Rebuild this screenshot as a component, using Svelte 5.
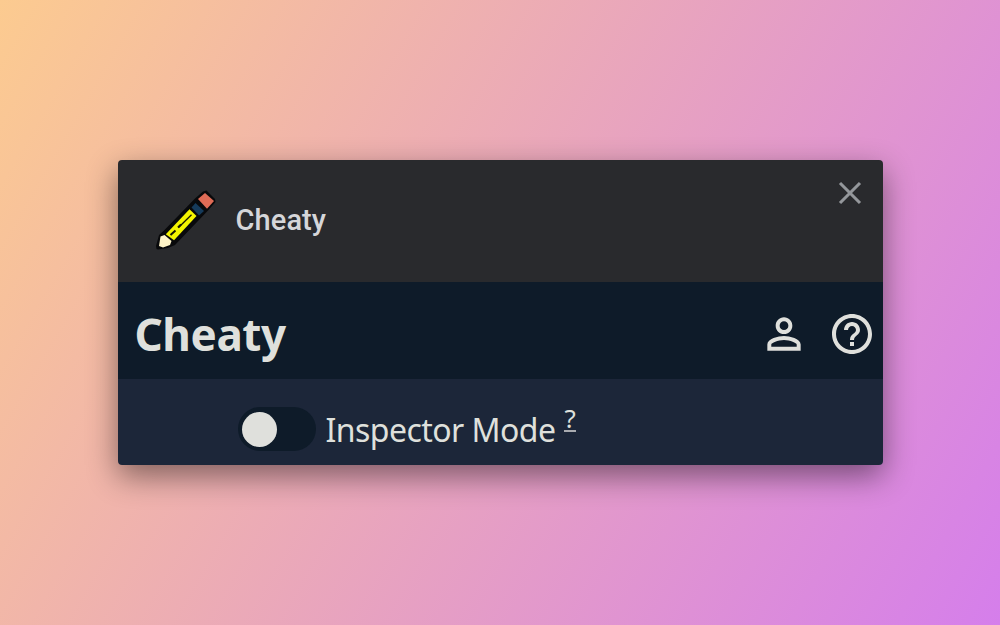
<script>
  let inspector = $state(false);
</script>

<main>
  <section class="card">
    <header class="top">
      <svg class="pencil" viewBox="0 0 70 70" width="70" height="70">
        <path d="M6 61 9 50 14 45.500 45 13.500 53 6.500 56.500 5.500 65 14 65.500 17 58 25.500 25 60 18 63 8 64.500 6.500 64Z" fill="#08090b" />
        <path d="M15.800 49.200 39.500 24.200 46.500 31 24 55.300Z" fill="#f4f400" />
        <path d="M28.500 42.500 41.500 29.800" stroke="#181903" stroke-width="1.300" fill="none" />
        <path d="M20.500 50 25.500 45.500M28 42.500 31 39.500" stroke="#181903" stroke-width="2" />
        <path d="M41.500 22.500 45.500 18 54 26 49 30.500Z" fill="#153a5a" />
        <path d="M48 14 55 8 64 16 57 23.700Z" fill="#df6b56" />
        <path d="M10.500 51.500 14.500 50 21.500 56 20 60 13 62.500 9 61Z" fill="#fff5c8" />
      </svg>
      <span class="name">Cheaty</span>
      <svg class="close" viewBox="0 0 24 24" width="24" height="24">
        <path d="M2 2 22 22M22 2 2 22" stroke="#94979b" stroke-width="3.100" />
      </svg>
    </header>
    <div class="bar">
      <h1>Cheaty</h1>
      <svg class="user" viewBox="0 0 24 24" width="50" height="50" fill="#dfe0dc">
        <path d="M12 5.900a2.100 2.100 0 1 1 0 4.200 2.100 2.100 0 0 1 0-4.200m0 9c2.970 0 6.100 1.460 6.100 2.100v1.100H5.900V17c0-.640 3.130-2.100 6.100-2.100M12 4C9.790 4 8 5.790 8 8s1.790 4 4 4 4-1.790 4-4-1.790-4-4-4zm0 9c-2.670 0-8 1.340-8 4v3h16v-3c0-2.660-5.330-4-8-4z" />
      </svg>
      <svg class="help" viewBox="0 0 24 24" width="48" height="48" fill="#dfe0dc">
        <path d="M11 18h2v-2h-2v2zm1-16C6.480 2 2 6.480 2 12s4.480 10 10 10 10-4.480 10-10S17.520 2 12 2zm0 18c-4.410 0-8-3.590-8-8s3.590-8 8-8 8 3.590 8 8-3.590 8-8 8zm0-14c-2.210 0-4 1.790-4 4h2c0-1.100.900-2 2-2s2 .900 2 2c0 2-3 1.750-3 5h2c0-2.250 3-2.500 3-5 0-2.210-1.790-4-4-4z" />
      </svg>
    </div>
    <div class="mode">
      <button class="switch" class:on={inspector} onclick={() => (inspector = !inspector)} aria-label="Inspector Mode"><i></i></button>
      <span class="label">Inspector Mode</span>
      <span class="hint">?</span>
    </div>
  </section>
</main>

<style>
  :global(body) { margin: 0; }
  main {
    width: 1000px;
    height: 625px;
    display: flex;
    align-items: center;
    justify-content: center;
    background: linear-gradient(120deg, #fccb90 0%, #d57eeb 100%);
  }
  .card {
    width: 765px;
    height: 305px;
    border-radius: 4px;
    overflow: hidden;
    box-shadow: 0 11px 31px rgba(0, 0, 0, 0.46);
    font-family: "Noto Sans", sans-serif;
    color: #dfe0dc;
    white-space: nowrap;
  }
  svg { display: block; flex: none; }
  .top {
    box-sizing: border-box;
    height: 122px;
    padding: 25px 21px 0 32px;
    display: flex;
    align-items: flex-start;
    background: #292a2d;
  }
  .name {
    margin: 18px 0 0 16px;
    font: 500 29px/34px Roboto, sans-serif;
    letter-spacing: 0.1px;
    color: #d5d6d9;
  }
  .close { margin: -4px 0 0 auto; }
  .bar {
    box-sizing: border-box;
    height: 97px;
    padding: 0 7px 0 17px;
    display: flex;
    align-items: center;
    background: #0e1b29;
  }
  h1 {
    margin: 6px 0 0;
    font-size: 44px;
    line-height: 60px;
    font-weight: 700;
    letter-spacing: -0.4px;
  }
  .user { margin: 7px 0 0 auto; }
  .help { margin: 7px 0 0 19px; }
  .mode {
    box-sizing: border-box;
    height: 86px;
    padding: 28px 0 0 120px;
    display: flex;
    align-items: flex-start;
    background: #1c2639;
  }
  .switch {
    box-sizing: border-box;
    width: 78px;
    height: 44px;
    padding: 5px 4px 4px;
    border: 0;
    border-radius: 22px;
    background: #0e1b29;
    display: flex;
    align-items: center;
  }
  .switch.on { justify-content: flex-end; }
  .switch i {
    width: 35.5px;
    height: 35.5px;
    border-radius: 50%;
    background: #dfe0dc;
  }
  .label {
    margin: 1px 0 0 10px;
    font-size: 32px;
    line-height: 44px;
    letter-spacing: -0.55px;
  }
  .hint {
    margin: -1px 0 0 9px;
    font-size: 26px;
    line-height: 24px;
    border-bottom: 2px solid #a9abb0;
  }
</style>
